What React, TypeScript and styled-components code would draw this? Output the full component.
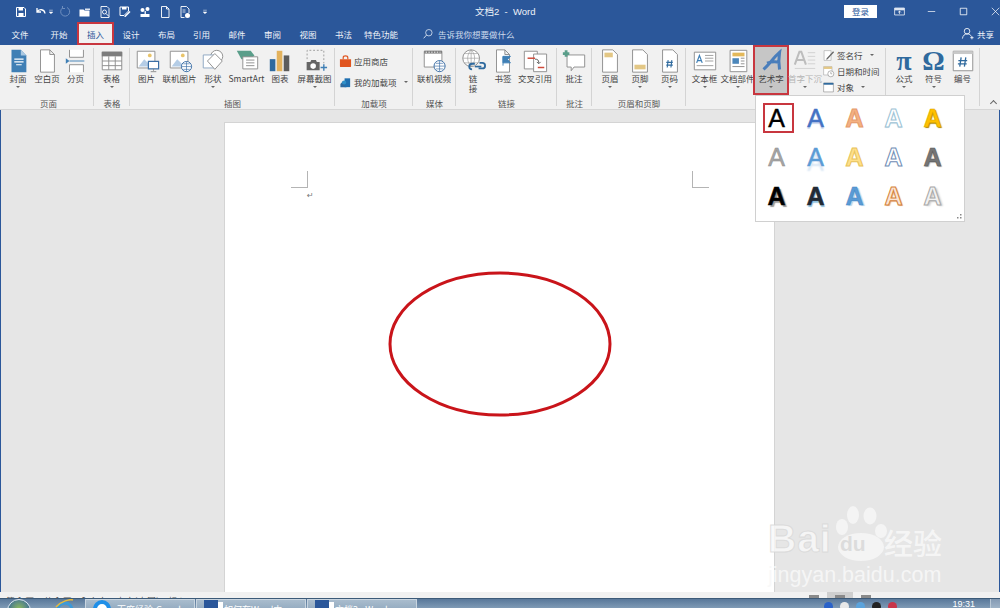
import React from "react";
import styled, { createGlobalStyle } from "styled-components";

const GlobalStyle = createGlobalStyle`
    html, body {
        margin: 0;
        padding: 0;
        background: #e6e6e6;
        overflow: hidden;
    }
    body {
        font-family: "Noto Sans CJK SC", "Liberation Sans", sans-serif;
    }
`;

const BLUE = "#2b579a";
const LINE = "#8d8d8d";

// ribbon and title bar drawings, all on a 28x28 grid
const GLYPHS: Record<string, React.ReactNode> = {
    cover: (
        <>
            <path d="M7 2h10l6 6v18H7z" fill="#3f7fb5" />
            <path d="M17 2l6 6h-6z" fill="#a9c8e2" />
            <path d="M10 12h10M10 15h10M12 18h6" stroke="#fff" strokeWidth="1.2" />
        </>
    ),
    blank: <path d="M7 2h10l5 5v19H7zM17 2v5h5" fill="#fff" stroke={LINE} />,
    pagebreak: (
        <>
            <path d="M7 2v8h15V2M7 26v-8h15v8" fill="#fff" stroke={LINE} />
            <path d="M3 11l4 3-4 3z" fill="#3f7fb5" />
            <path d="M7 14h16" stroke="#3f7fb5" />
        </>
    ),
    table: (
        <>
            <path d="M3.500 4.500h21v19h-21zM3.500 14h21M3.500 19h21M10.500 9v14.500M17.500 9v14.500" fill="#fff" stroke="#8b8b8b" />
            <path d="M3 4h22v5H3z" fill="#7d7d7d" />
        </>
    ),
    picture: (
        <>
            <path d="M3.500 3.500h19v18h-19z" fill="#fff" stroke={LINE} />
            <path d="M5 20l6-8 5 5 3-2 3 5z" fill="#b5cde6" />
            <circle cx="17" cy="8" r="2" fill="#e9c46a" />
            <path d="M15.500 14.500h11v8h-11z" fill="#fff" stroke="#3a6ea5" strokeWidth="1.300" />
            <path d="M21 22.500v2M18 25.500h6" stroke="#888" />
        </>
    ),
    onlinepicture: (
        <>
            <path d="M3.500 3.500h19v18h-19z" fill="#fff" stroke={LINE} />
            <path d="M5 20l6-8 5 5 3-2 3 5z" fill="#b5cde6" />
            <circle cx="17" cy="8" r="2" fill="#e9c46a" />
            <circle cx="21" cy="20" r="5.500" fill="#fff" stroke="#3a6ea5" />
            <path d="M15.500 20h11M21 14.500v11M17.500 17h7M17.500 23h7" stroke="#3a6ea5" strokeWidth=".7" />
        </>
    ),
    shapes: (
        <>
            <circle cx="18" cy="9" r="6.500" fill="#fff" stroke={LINE} />
            <path d="M3.500 7.500h13v14h-13z" fill="#fff" stroke="#8aa4c0" />
            <path d="M16 6l8 8-8 9-8-9z" fill="#fff" stroke={LINE} />
        </>
    ),
    smartart: (
        <>
            <path d="M3 3h15l4 5-4 4H8z" fill="#5a9e8a" />
            <path d="M9.500 9.500h16v13h-16z" fill="#fff" stroke={LINE} />
            <path d="M13 13h9M13 16h9M13 19h9" stroke="#8d8d8d" />
        </>
    ),
    chart: (
        <>
            <path d="M3 12h6v13H3z" fill="#2f6a9e" />
            <path d="M10.500 3h6v22h-6z" fill="#e3b25d" />
            <path d="M18 8h6v17h-6z" fill="#5c5c5c" />
        </>
    ),
    screenshot: (
        <>
            <path d="M5.500 12V2.500h18v14" fill="none" stroke="#999" strokeDasharray="2 2" />
            <path d="M5 15h4l1-2h5l1 2h3v9H5z" fill="#666" />
            <circle cx="12" cy="19.500" r="3" fill="#fff" />
            <path d="M20 21h7M23.500 17.500v7" stroke="#3f7fb5" strokeWidth="1.500" />
        </>
    ),
    video: (
        <>
            <path d="M3.500 3.500h19v17h-19z" fill="#fff" stroke={LINE} />
            <path d="M3.500 3h19v3h-19z" fill="#7a7a7a" />
            <path d="M5 4.500h16" stroke="#fff" strokeDasharray="1.500 1.500" />
            <circle cx="20" cy="19.500" r="6" fill="#fff" stroke="#3a6ea5" />
            <path d="M14 19.500h12M20 13.500v12M16 16.500h8M16 22.500h8" stroke="#3a6ea5" strokeWidth=".7" />
        </>
    ),
    link: (
        <>
            <circle cx="12" cy="11" r="9" fill="#fff" stroke="#8a8a8a" />
            <path d="M3 11h18M12 2v18M5 6h14M5 16h14" stroke="#9a9a9a" strokeWidth=".7" />
            <path d="M12 2c-5 5-5 13 0 18M12 2c5 5 5 13 0 18" fill="none" stroke="#9a9a9a" strokeWidth=".7" />
            <path d="M14 23a3 3 0 010-6h3M22 16h3a3 3 0 010 6h-4" fill="none" stroke="#2f6a9e" strokeWidth="2" transform="translate(-1)" />
            <path d="M16 20h7" stroke="#2f6a9e" strokeWidth="1.800" />
        </>
    ),
    bookmark: (
        <>
            <path d="M7 2h9l5 5v19H7zM16 2v5h5" fill="#fff" stroke={LINE} />
            <path d="M14 9v10M14 9h8l-3 3.500 3 3.500h-8z" fill="#3f7fb5" stroke="#3f7fb5" />
        </>
    ),
    crossref: (
        <>
            <path d="M2.500 3.500h14v19h-14z" fill="#fff" stroke={LINE} />
            <path d="M12.500 6.500h14v19h-14z" fill="#fff" stroke={LINE} />
            <path d="M6 11h8" stroke="#cf4a3a" strokeWidth="1.600" />
            <path d="M17 21h7" stroke="#cf4a3a" strokeWidth="1.600" />
            <path d="M14 12c3 0 4 1 4 4M16 15l2 2 2-2" fill="none" stroke="#555" />
        </>
    ),
    comment: (
        <>
            <path d="M6.500 7.500h19v13H14l-3 4v-4H6.500z" fill="#fff" stroke={LINE} />
            <path d="M2 6h7M5.500 2.500v7" stroke="#5a9e8a" strokeWidth="3" />
        </>
    ),
    header: (
        <>
            <path d="M6 2h11l5 5v19H6z" fill="#fff" stroke={LINE} />
            <path d="M8 5h9v5H8z" fill="#e3c785" />
        </>
    ),
    footer: (
        <>
            <path d="M6 2h11l5 5v19H6z" fill="#fff" stroke={LINE} />
            <path d="M8 18h12v5H8z" fill="#e3c785" />
        </>
    ),
    pagenum: (
        <>
            <path d="M6 2h11l5 5v19H6z" fill="#fff" stroke={LINE} />
            <path d="M12 13l-1 8M16 13l-1 8M10 15.500h7M10 18.500h7" stroke="#2f6a9e" strokeWidth="1.200" />
        </>
    ),
    textbox: (
        <>
            <path d="M2.500 4.500h23v19h-23z" fill="#fff" stroke={LINE} />
            <path d="M5 16l3-8 3 8M6 13.500h4" fill="none" stroke="#3f7fb5" strokeWidth="1.300" />
            <path d="M14 8h9M14 11h9M14 14h9M5 19h18" stroke="#9a9a9a" />
        </>
    ),
    docparts: (
        <>
            <path d="M5.500 2.500h18v23h-18z" fill="#fff" stroke={LINE} />
            <path d="M8 5h13v4H8z" fill="#e3b85a" />
            <path d="M8 11h7v6H8z" fill="#4c87bb" />
            <path d="M17 11h4M17 14h4M17 17h4M8 20h13" stroke="#8d8d8d" />
        </>
    ),
    wordart: (
        <path d="M5 24C11 19 16 11 23 5c-1 6-1 13 0 19M9 17c5-2 9-2 14-1" fill="none" stroke="#4a7ebb" strokeWidth="3.400" />
    ),
    dropcap: (
        <>
            <path d="M3 18l5-14h2l5 14M5 13h8" fill="none" stroke="#bdbdbd" strokeWidth="2.200" />
            <path d="M17 5h8M17 9h8M17 13h8M17 17h8M3 22h22" stroke="#d0d0d0" />
        </>
    ),
    numberbox: (
        <>
            <path d="M3.500 3.500h21v21h-21z" fill="#fff" stroke={LINE} />
            <path d="M3.500 3.500h21v3h-21z" fill="#c9c9c9" />
            <path d="M12 10l-1.500 10M17 10l-1.500 10M9 13.500h9.500M8.500 17h9.500" stroke="#2f6a9e" strokeWidth="1.400" />
        </>
    ),
    store: (
        <>
            <path d="M2 9h24v15a2 2 0 01-2 2H4a2 2 0 01-2-2z" fill="#e0551f" />
            <path d="M9 9V6a5 4 0 0110 0v3" fill="none" stroke="#e0551f" strokeWidth="2.500" />
        </>
    ),
    addin: (
        <>
            <path d="M8 12h8v12H3v-7z" fill="#2f6a9e" />
            <path d="M12 5h12v19H12z" fill="#1f6fb0" />
            <circle cx="11" cy="14" r="4.500" fill="#2f8fc8" />
        </>
    ),
    sign: (
        <>
            <path d="M4.500 3.500h15v21h-15z" fill="#fff" stroke={LINE} />
            <path d="M10 20L24 5l2 2-14 15-3 1z" fill="#666" />
        </>
    ),
    datetime: (
        <>
            <path d="M3.500 3.500h18v18h-18z" fill="#fff" stroke={LINE} />
            <path d="M3.500 3.500h18v5h-18z" fill="#e3c785" />
            <circle cx="19" cy="19" r="6.500" fill="#fff" stroke="#666" />
            <path d="M19 15v4h3" fill="none" stroke="#666" />
        </>
    ),
    object: (
        <>
            <path d="M3.500 4.500h21v19h-21z" fill="#fff" stroke="#666" />
            <path d="M3.500 4h21v4h-21z" fill="#2f6a9e" />
        </>
    ),
    save: (
        <>
            <path d="M5 5h15l3 3v15H5z" fill="none" stroke="#fff" strokeWidth="2" />
            <path d="M9 5h9v6H9zM9 16h10v7H9z" fill="#fff" />
        </>
    ),
    undo: <path d="M6 6v8h8M6 14c4-7 15-6 16 3" fill="none" stroke="#fff" strokeWidth="2.600" />,
    redo: <path d="M18 5a9 9 0 11-9 1M9 2v5h5" fill="none" stroke="#6f8fbf" strokeWidth="2" />,
    open: (
        <>
            <path d="M3 9h8l2 2h10v12H3z" fill="#fff" />
            <path d="M14 7h10v3H14z" fill="#dfe6f1" />
        </>
    ),
    preview: (
        <>
            <path d="M6 3h12l4 4v18H6z" fill="none" stroke="#fff" strokeWidth="1.800" />
            <circle cx="13" cy="14" r="4" fill="none" stroke="#fff" strokeWidth="1.800" />
            <path d="M16 17l6 6" stroke="#fff" strokeWidth="2" />
        </>
    ),
    saveas: (
        <>
            <path d="M4 4h17v8l-9 9H4z" fill="none" stroke="#fff" strokeWidth="2" />
            <path d="M8 4h9v5H8z" fill="#fff" />
            <path d="M13 22l10-10 2 2-10 10h-2z" fill="#fff" />
        </>
    ),
    clip: (
        <>
            <circle cx="9" cy="10" r="4" fill="#fff" />
            <circle cx="19" cy="8" r="4" fill="#fff" />
            <path d="M5 18h18v6H5z" fill="#fff" />
            <path d="M13 12h3v6h-3z" fill="#dfe6f1" />
        </>
    ),
    newdoc: <path d="M7 3h10l5 5v17H7zM17 3v5h5" fill="none" stroke="#fff" strokeWidth="1.800" />,
    savedoc: (
        <>
            <path d="M6 3h11l5 5v8M6 3v22h7" fill="none" stroke="#fff" strokeWidth="1.800" />
            <circle cx="19" cy="21" r="5" fill="#fff" />
            <path d="M9 10h6M9 14h6" stroke="#fff" strokeWidth="1.500" />
        </>
    ),
    caret: <path d="M9 9h10M9 14l5 5 5-5z" fill="#fff" stroke="#fff" strokeWidth="1.400" />,
    ribbonmode: (
        <>
            <path d="M3.500 6.500h21v15h-21z" fill="none" stroke="#fff" strokeWidth="1.600" />
            <path d="M3.500 6.500h21v5h-21z" fill="#dfe6f1" />
            <path d="M14 13v6M11 16l3-3 3 3" fill="none" stroke="#fff" strokeWidth="1.600" />
        </>
    ),
    minimize: <path d="M6 14h16" stroke="#fff" strokeWidth="1.500" />,
    maximize: <path d="M7 7h14v14H7z" fill="none" stroke="#fff" strokeWidth="1.700" />,
    close: <path d="M6 6l16 16M22 6L6 22" stroke="#fff" strokeWidth="1.500" />,
    search: (
        <>
            <circle cx="16" cy="11" r="7.500" fill="none" stroke="#e4ebf6" strokeWidth="1.800" />
            <path d="M10.500 16.500L4 24" stroke="#e4ebf6" strokeWidth="2" />
        </>
    ),
    person: (
        <>
            <circle cx="13" cy="9" r="6" fill="none" stroke="#fff" strokeWidth="1.800" />
            <path d="M3 25c1-7 5-10 10-10s8 2 9 5M20 23h7M23.500 19.500v7" fill="none" stroke="#fff" strokeWidth="1.800" />
        </>
    ),
};

type ListDef = { icon: string; label: string; caret?: boolean };

type ButtonDef = {
    label?: string;
    second?: string;
    icon?: string;
    letter?: string;
    width?: number;
    caret?: boolean;
    active?: boolean;
    muted?: boolean;
    list?: ListDef[];
    listGap?: number;
    listTop?: number;
    listLeft?: number;
};

type GroupDef = {
    label: string;
    width: number;
    inset?: number;
    items: ButtonDef[];
};

const GROUPS: GroupDef[] = [
    {
        label: "页面",
        width: 91,
        items: [
            { label: "封面", icon: "cover", width: 30, caret: true },
            { label: "空白页", icon: "blank", width: 28 },
            { label: "分页", icon: "pagebreak", width: 29 },
        ],
    },
    { label: "表格", width: 36, items: [{ label: "表格", icon: "table", width: 35, caret: true }] },
    {
        label: "插图",
        width: 205,
        items: [
            { label: "图片", icon: "picture", width: 33 },
            { label: "联机图片", icon: "onlinepicture", width: 33 },
            { label: "形状", icon: "shapes", width: 34, caret: true },
            { label: "SmartArt", icon: "smartart", width: 33 },
            { label: "图表", icon: "chart", width: 34 },
            { label: "屏幕截图", icon: "screenshot", width: 35, caret: true },
        ],
    },
    {
        label: "加载项",
        width: 78,
        items: [
            {
                width: 77,
                listGap: 7,
                listTop: 9,
                listLeft: 4,
                list: [
                    { icon: "store", label: "应用商店" },
                    { icon: "addin", label: "我的加载项", caret: true },
                ],
            },
        ],
    },
    { label: "媒体", width: 43, items: [{ label: "联机视频", icon: "video", width: 42 }] },
    {
        label: "链接",
        width: 101,
        items: [
            { label: "链", second: "接", icon: "link", width: 34 },
            { label: "书签", icon: "bookmark", width: 26 },
            { label: "交叉引用", icon: "crossref", width: 38 },
        ],
    },
    { label: "批注", width: 35, items: [{ label: "批注", icon: "comment", width: 34 }] },
    {
        label: "页眉和页脚",
        width: 94,
        inset: 3,
        items: [
            { label: "页眉", icon: "header", width: 30, caret: true },
            { label: "页脚", icon: "footer", width: 30, caret: true },
            { label: "页码", icon: "pagenum", width: 29, caret: true },
        ],
    },
    {
        // its label sits under the open gallery in this state
        label: "",
        width: 200,
        inset: 2,
        items: [
            { label: "文本框", icon: "textbox", width: 33, caret: true },
            { label: "文档部件", icon: "docparts", width: 33, caret: true },
            { label: "艺术字", icon: "wordart", width: 34, caret: true, active: true },
            { label: "首字下沉", icon: "dropcap", width: 34, caret: true, muted: true },
            {
                width: 62,
                listGap: 2,
                listTop: 3,
                listLeft: 0,
                list: [
                    { icon: "sign", label: "签名行", caret: true },
                    { icon: "datetime", label: "日期和时间" },
                    { icon: "object", label: "对象", caret: true },
                ],
            },
        ],
    },
    {
        label: "",
        width: 94,
        inset: 3,
        items: [
            { label: "公式", letter: "π", width: 30, caret: true },
            { label: "符号", letter: "Ω", width: 29, caret: true },
            { label: "编号", icon: "numberbox", width: 29 },
        ],
    },
];

const TABS = [
    { label: "文件", width: 40 },
    { label: "开始", width: 38 },
    { label: "插入", width: 35, active: true },
    { label: "设计", width: 36 },
    { label: "布局", width: 35 },
    { label: "引用", width: 35 },
    { label: "邮件", width: 36 },
    { label: "审阅", width: 35 },
    { label: "视图", width: 36 },
    { label: "书法", width: 35 },
    { label: "特色功能", width: 40 },
];

const QUICK = [
    { name: "save", width: 20 },
    { name: "undo", width: 20 },
    { name: "caret", width: 8, tuck: true },
    { name: "redo", width: 20 },
    { name: "open", width: 20 },
    { name: "preview", width: 20 },
    { name: "saveas", width: 20 },
    { name: "clip", width: 20 },
    { name: "newdoc", width: 20 },
    { name: "savedoc", width: 20 },
    { name: "caret", width: 20 },
];

const ART_STYLES = [
    { fill: "#000", stroke: "#000", line: 0.4, shadow: "none", weight: 400, selected: true },
    { fill: "#4472c4", stroke: "#4472c4", line: 0.5, shadow: "0 2px 1px #c8d6ee", weight: 400 },
    { fill: "#f4b183", stroke: "#e59a6c", line: 1, shadow: "none", weight: 700 },
    { fill: "#fff", stroke: "#9dc3d6", line: 1, shadow: "0 1px 1px #cfdfe8", weight: 700 },
    { fill: "#ffc000", stroke: "#d9a400", line: 0.5, shadow: "1px 1px 1px #a98400", weight: 700 },
    { fill: "#a5a5a5", stroke: "#8d8d8d", line: 0.5, shadow: "none", weight: 400 },
    { fill: "#5b9bd5", stroke: "#5b9bd5", line: 0.5, shadow: "0 5px 2px #d5e4f3", weight: 400 },
    { fill: "#ffe08a", stroke: "#e8c35c", line: 1, shadow: "none", weight: 700 },
    { fill: "#fff", stroke: "#6f8db5", line: 1, shadow: "none", weight: 700 },
    { fill: "#757575", stroke: "#555", line: 0.5, shadow: "1px 1px 1px #aaa", weight: 700 },
    { fill: "#000", stroke: "#000", line: 0.5, shadow: "2px 2px 1px #999", weight: 700 },
    { fill: "#222a35", stroke: "#222a35", line: 0.5, shadow: "1px 2px 1px #8fc0de", weight: 700 },
    { fill: "#5b9bd5", stroke: "#3f86c4", line: 0.5, shadow: "2px 1px 1px #b5d4ec", weight: 700 },
    { fill: "#fbe5d6", stroke: "#d5833d", line: 1, shadow: "1px 1px 1px #e6b48a", weight: 700 },
    { fill: "#f2f2f2", stroke: "#a8a8a8", line: 1, shadow: "2px 1px 2px #ccc", weight: 700 },
];

function Glyph({ name, size }: { name: string; size: number }) {
    return (
        <GlyphSvg viewBox="0 0 28 28" $size={size}>
            {GLYPHS[name]}
        </GlyphSvg>
    );
}

function RibbonItem({ item }: { item: ButtonDef }) {
    if (item.list) {
        return (
            <ListStack $width={item.width || 60} $gap={item.listGap || 0} $top={item.listTop || 0} $left={item.listLeft || 0}>
                {item.list.map(row => (
                    <ListRow key={row.label}>
                        <Glyph name={row.icon} size={13} />
                        <span>{row.label}</span>
                        {row.caret && <Caret $wide />}
                    </ListRow>
                ))}
            </ListStack>
        );
    }

    return (
        <BigButton $width={item.width || 30} $active={item.active} $muted={item.muted}>
            <IconSlot>
                {item.icon ? <Glyph name={item.icon} size={item.active ? 25 : 26} /> : <MathLetter>{item.letter}</MathLetter>}
            </IconSlot>
            <BigLabel>{item.label}</BigLabel>
            {item.second && <BigLabel>{item.second}</BigLabel>}
            {item.caret && <Caret />}
        </BigButton>
    );
}

export default function App() {
    return (
        <Window>
            <GlobalStyle />
            <TitleBar>
                <QuickAccess>
                    {QUICK.map((slot, i) => (
                        <QuickSlot key={i} $width={slot.width} $tuck={slot.tuck}>
                            <Glyph name={slot.name} size={slot.name === "caret" ? 10 : 14} />
                        </QuickSlot>
                    ))}
                </QuickAccess>
                <DocTitle>文档2  -  Word</DocTitle>
                <WindowControls>
                    <SignIn>登录</SignIn>
                    <ControlSlot><Glyph name="ribbonmode" size={13} /></ControlSlot>
                    <ControlSlot><Glyph name="minimize" size={13} /></ControlSlot>
                    <ControlSlot><Glyph name="maximize" size={13} /></ControlSlot>
                    <ControlSlot><Glyph name="close" size={13} /></ControlSlot>
                </WindowControls>
            </TitleBar>

            <TabBar>
                {TABS.map(tab => (
                    <Tab key={tab.label} $width={tab.width} $active={tab.active}>{tab.label}</Tab>
                ))}
                <SearchHint>
                    <Glyph name="search" size={12} />
                    <span>告诉我你想要做什么</span>
                </SearchHint>
                <Share>
                    <Glyph name="person" size={13} />
                    <span>共享</span>
                </Share>
            </TabBar>

            <Ribbon>
                {GROUPS.map((group, g) => (
                    <Group key={g} $width={group.width}>
                        <GroupBody $inset={group.inset || 0}>
                            {group.items.map((item, i) => <RibbonItem key={i} item={item} />)}
                        </GroupBody>
                        <GroupLabel>{group.label}</GroupLabel>
                    </Group>
                ))}
                <CollapseMark />
            </Ribbon>

            <DocArea>
                <Page>
                    <MarginMarks>
                        <CornerMark $side="left" />
                        <CornerMark $side="right" />
                    </MarginMarks>
                    <ReturnMark>↵</ReturnMark>
                    <EllipseShape viewBox="0 0 224 146">
                        <ellipse cx="112" cy="73" rx="110" ry="71" fill="none" stroke="#c9141a" strokeWidth="3" />
                    </EllipseShape>
                </Page>
            </DocArea>

            <StatusBar>
                <StatusLeft>第 1 页，共 1 页　0 个字　中文(中国)　插入</StatusLeft>
                <ViewButtons>
                    <ViewButton />
                    <ViewButton $active />
                    <ViewButton />
                </ViewButtons>
            </StatusBar>

            <Taskbar>
                <StartOrb />
                <IeIcon viewBox="0 0 20 20">
                    <path d="M3 11a7 7 0 0114 0H7a4 4 0 007 2" fill="none" stroke="#3b9ad9" strokeWidth="3" />
                    <path d="M1 8C6 2 15 0 18 1" fill="none" stroke="#e8b93a" strokeWidth="1.500" />
                </IeIcon>
                <TaskButton>
                    <AppDot />
                    <span>百度经验-Google</span>
                </TaskButton>
                <TaskButton>
                    <WordDot />
                    <span>如何在Word中</span>
                </TaskButton>
                <TaskButton>
                    <WordDot />
                    <span>文档2 - Word</span>
                </TaskButton>
                <Tray>
                    <TrayDot $color="#2a62c9" />
                    <TrayDot $color="#e8e8e8" />
                    <TrayDot $color="#5ba3dc" />
                    <TrayDot $color="#222" />
                    <TrayDot $color="#c8354a" />
                    <TrayClock>19:31</TrayClock>
                    <ShowDesktop />
                </Tray>
            </Taskbar>

            <GalleryPanel>
                <GalleryGrid>
                    {ART_STYLES.map((art, i) => (
                        <GalleryCell key={i}>
                            <ArtLetter
                                $fill={art.fill}
                                $stroke={art.stroke}
                                $line={art.line}
                                $shadow={art.shadow}
                                $weight={art.weight}
                                $selected={art.selected}
                            >
                                A
                            </ArtLetter>
                        </GalleryCell>
                    ))}
                </GalleryGrid>
                <ResizeGrip>
                    <svg viewBox="0 0 6 6" width="6" height="6">
                        <path d="M4 0h1.500v1.500H4zM1 3h1.500v1.500H1zM4 3h1.500v1.500H4z" fill="#888" />
                    </svg>
                </ResizeGrip>
            </GalleryPanel>

            <Watermark>
                <WatermarkTop>
                    <BrandText>Bai</BrandText>
                    <PawSvg viewBox="0 0 60 60">
                        <ellipse cx="15" cy="26" rx="6" ry="8" fill="#f4f4f4" />
                        <ellipse cx="26" cy="14" rx="6" ry="9" fill="#f4f4f4" />
                        <ellipse cx="43" cy="15" rx="6.500" ry="8.500" fill="#f4f4f4" />
                        <ellipse cx="54" cy="30" rx="6" ry="7" fill="#f4f4f4" />
                        <ellipse cx="34" cy="46" rx="23" ry="14" fill="#f4f4f4" />
                    </PawSvg>
                    <BrandDu>du</BrandDu>
                    <BrandCn>经验</BrandCn>
                </WatermarkTop>
                <BrandUrl>jingyan.baidu.com</BrandUrl>
            </Watermark>
        </Window>
    );
}

const Window = styled.div`
    position: relative;
    width: 1000px;
    height: 608px;
    display: flex;
    flex-direction: column;
    overflow: hidden;
    background: ${BLUE};
`;

const GlyphSvg = styled.svg<{ $size: number }>`
    width: ${p => p.$size}px;
    height: ${p => p.$size}px;
    flex: none;
    display: block;
`;

const TitleBar = styled.div`
    height: 22px;
    flex: none;
    position: relative;
    display: flex;
    align-items: center;
    justify-content: space-between;
    padding: 1px 0 0 11px;
    box-sizing: border-box;
    color: #fff;
`;

const QuickAccess = styled.div`
    display: flex;
    align-items: center;
`;

const QuickSlot = styled.div<{ $width: number; $tuck?: boolean }>`
    width: ${p => p.$width}px;
    margin-left: ${p => (p.$tuck ? "-4px" : "0")};
    display: flex;
    justify-content: center;
`;

const DocTitle = styled.div`
    position: absolute;
    left: 475px;
    top: 4px;
    font-size: 9.500px;
    line-height: 15px;
    color: #eef2f8;
    white-space: pre;
    font-family: "Liberation Sans", "Noto Sans CJK SC", sans-serif;
`;

const WindowControls = styled.div`
    display: flex;
    align-items: center;
    margin-right: -11px;
`;

const SignIn = styled.div`
    width: 33px;
    height: 13px;
    margin-right: 6px;
    background: #fff;
    color: #2b579a;
    font-size: 8.500px;
    line-height: 13px;
    text-align: center;
`;

const ControlSlot = styled.div`
    width: 32px;
    display: flex;
    justify-content: center;
`;

const TabBar = styled.div`
    height: 23px;
    flex: none;
    display: flex;
    align-items: stretch;
    color: #f1f4f9;
    font-size: 8.500px;
`;

const Tab = styled.div<{ $width: number; $active?: boolean }>`
    position: relative;
    width: ${p => p.$width}px;
    display: flex;
    align-items: center;
    justify-content: center;
    background: ${p => (p.$active ? "#f1f1f1" : "transparent")};
    color: ${p => (p.$active ? "#2b579a" : "inherit")};

    ${p => p.$active && `
        &::after {
            content: "";
            position: absolute;
            inset: 0 -1px 0 -1px;
            border: 2px solid #c8363f;
        }
    `}
`;

const SearchHint = styled.div`
    display: flex;
    align-items: center;
    gap: 4px;
    margin-left: 21px;
    color: #cfdbec;
    font-size: 8.500px;
`;

const Share = styled.div`
    margin-left: auto;
    padding-right: 6px;
    display: flex;
    align-items: center;
    gap: 3px;
`;

const Ribbon = styled.div`
    height: 65px;
    flex: none;
    position: relative;
    display: flex;
    padding-left: 3px;
    background: #f1f1f1;
    border-bottom: 1px solid #d6d6d6;
    box-sizing: border-box;
`;

const Group = styled.div<{ $width: number }>`
    width: ${p => p.$width}px;
    flex: none;
    box-sizing: border-box;
    display: flex;
    flex-direction: column;
    position: relative;

    &::after {
        content: "";
        position: absolute;
        right: 0;
        top: 3px;
        bottom: 3px;
        width: 1px;
        background: #d4d4d4;
    }
`;

const GroupBody = styled.div<{ $inset: number }>`
    flex: 1;
    display: flex;
    align-items: flex-start;
    padding-left: ${p => p.$inset}px;
    min-height: 0;
`;

const GroupLabel = styled.div`
    height: 12px;
    flex: none;
    font-size: 8.500px;
    line-height: 12px;
    color: #555;
    text-align: center;
`;

const BigButton = styled.div<{ $width: number; $active?: boolean; $muted?: boolean }>`
    position: relative;
    width: ${p => p.$width}px;
    flex: none;
    display: flex;
    flex-direction: column;
    align-items: center;
    padding-top: 3px;
    height: ${p => (p.$active ? "50px" : "auto")};
    box-sizing: border-box;
    background: ${p => (p.$active ? "#c6c6c6" : "transparent")};
    color: ${p => (p.$muted ? "#b4b4b4" : "#444")};

    ${p => p.$active && `
        &::after {
            content: "";
            position: absolute;
            inset: 0 -1px 0 -1px;
            border: 2px solid #c8363f;
        }
    `}
`;

const IconSlot = styled.div`
    height: 25px;
    display: flex;
    align-items: center;
    justify-content: center;
`;

const MathLetter = styled.span`
    font-family: "Liberation Serif", serif;
    font-weight: 700;
    font-size: 28px;
    line-height: 25px;
    color: #2f6a9e;
`;

const BigLabel = styled.div`
    font-size: 8.500px;
    line-height: 10px;
    white-space: nowrap;
`;

const Caret = styled.i<{ $wide?: boolean }>`
    display: block;
    flex: none;
    width: 0;
    height: 0;
    border-left: 2px solid transparent;
    border-right: 2px solid transparent;
    border-top: 2px solid #666;
    margin: ${p => (p.$wide ? "0 0 0 5px" : "3px 0 0")};
`;

const ListStack = styled.div<{ $width: number; $gap: number; $top: number; $left: number }>`
    width: ${p => p.$width}px;
    flex: none;
    display: flex;
    flex-direction: column;
    gap: ${p => p.$gap}px;
    padding: ${p => p.$top}px 0 0 ${p => p.$left}px;
    box-sizing: border-box;
`;

const ListRow = styled.div`
    display: flex;
    align-items: center;
    gap: 2px;
    height: 14px;
    font-size: 8.500px;
    color: #444;
    white-space: nowrap;
`;

const CollapseMark = styled.i`
    position: absolute;
    right: 4px;
    bottom: 3px;
    width: 4px;
    height: 4px;
    border-left: 1px solid #666;
    border-top: 1px solid #666;
    transform: rotate(45deg);
`;

const DocArea = styled.div`
    flex: 1;
    min-height: 0;
    display: flex;
    justify-content: center;
    padding-top: 13px;
    background: #e6e6e6;
    margin: 0 1px;
`;

const Page = styled.div`
    width: 549px;
    margin-right: 1px;
    background: #fff;
    box-shadow: 0 0 0 1px #d4d4d4;
    display: flex;
    flex-direction: column;
`;

const MarginMarks = styled.div`
    display: flex;
    justify-content: space-between;
    padding: 48px 65px 0 66px;
`;

const CornerMark = styled.i<{ $side: "left" | "right" }>`
    display: block;
    width: 16px;
    height: 16px;
    border-bottom: 1px solid #b4b4b4;
    ${p => (p.$side === "left" ? "border-right" : "border-left")}: 1px solid #b4b4b4;
`;

const ReturnMark = styled.div`
    margin: 2px 0 0 82px;
    font-size: 8px;
    line-height: 11px;
    color: #777;
    font-family: "DejaVu Sans", sans-serif;
`;

const EllipseShape = styled.svg`
    display: block;
    width: 224px;
    height: 146px;
    margin: 70px 0 0 163px;
`;

const StatusBar = styled.div`
    height: 6px;
    flex: none;
    display: flex;
    align-items: flex-start;
    justify-content: space-between;
    overflow: hidden;
    background: #f1f1f1;
    padding: 0 121px 0 6px;
`;

const StatusLeft = styled.div`
    font-size: 8.500px;
    line-height: 12px;
    letter-spacing: 0.6px;
    color: #555;
    margin-top: 2px;
`;

const ViewButtons = styled.div`
    display: flex;
`;

const ViewButton = styled.i<{ $active?: boolean }>`
    width: 26px;
    height: 6px;
    display: flex;
    justify-content: center;
    padding-top: 3px;
    box-sizing: border-box;
    background: ${p => (p.$active ? "#cfcfcf" : "transparent")};

    &::after {
        content: "";
        width: 10px;
        height: 3px;
        background: #8a8a8a;
    }
`;

const Taskbar = styled.div`
    height: 10px;
    flex: none;
    display: flex;
    align-items: flex-start;
    overflow: hidden;
    background: linear-gradient(180deg, #59789a, #7f9ab5);
    border-top: 1px solid #3c5a78;
    box-sizing: border-box;
`;

const StartOrb = styled.i`
    flex: none;
    width: 22px;
    height: 22px;
    margin: 0 0 0 7px;
    border-radius: 50%;
    background: radial-gradient(circle at 50% 40%, #8fbb5e, #396b9b 70%);
    border: 1px solid #dfe8f0;
`;

const IeIcon = styled.svg`
    flex: none;
    width: 20px;
    height: 20px;
    margin: 0 0 0 24px;
`;

const TaskButton = styled.div`
    flex: none;
    width: 110px;
    height: 12px;
    margin-left: 1px;
    display: flex;
    align-items: flex-start;
    gap: 6px;
    padding-left: 7px;
    box-sizing: border-box;
    overflow: hidden;
    white-space: nowrap;
    background: linear-gradient(180deg, #a9bccd, #90a8be);
    border: 1px solid #c9d5e0;
    border-bottom: 0;
    font-size: 9px;
    line-height: 20px;
    color: #fff;

    &:first-of-type {
        margin-left: 10px;
    }
`;

const AppDot = styled.i`
    width: 18px;
    height: 18px;
    flex: none;
    box-sizing: border-box;
    border-radius: 50%;
    border: 4px solid #1f8fe8;
    background: #fff;
`;

const WordDot = styled.i`
    width: 14px;
    height: 14px;
    flex: none;
    background: #2b579a;
    box-shadow: 5px 2px 0 #fff;
`;

const Tray = styled.div`
    margin-left: auto;
    display: flex;
    align-items: flex-start;
    gap: 7px;
`;

const TrayDot = styled.i<{ $color: string }>`
    width: 9px;
    height: 9px;
    margin-top: 3px;
    border-radius: 50%;
    background: ${p => p.$color};
`;

const TrayClock = styled.div`
    margin-left: 48px;
    font-size: 9px;
    line-height: 10px;
    color: #fff;
    font-family: "Liberation Sans", sans-serif;
`;

const ShowDesktop = styled.i`
    width: 9px;
    height: 10px;
    margin-left: 8px;
    border-left: 1px solid #b9c8d6;
    background: rgba(255, 255, 255, 0.25);
`;

const GalleryPanel = styled.div`
    position: absolute;
    left: 755px;
    top: 95px;
    width: 210px;
    height: 127px;
    box-sizing: border-box;
    background: #fff;
    border: 1px solid #d0d0d0;
`;

const GalleryGrid = styled.div`
    display: grid;
    grid-template-columns: repeat(5, 39px);
    grid-auto-rows: 39px;
    padding: 2px 0 0 1px;
`;

const GalleryCell = styled.div`
    display: flex;
    align-items: center;
    justify-content: center;
`;

const ArtLetter = styled.span<{ $fill: string; $stroke: string; $line: number; $shadow: string; $weight: number; $selected?: boolean }>`
    width: 31px;
    height: 30px;
    box-sizing: border-box;
    display: flex;
    align-items: center;
    justify-content: center;
    border: 2px solid ${p => (p.$selected ? "#c8363f" : "transparent")};
    margin-left: ${p => (p.$selected ? "3px" : "0")};
    padding-right: ${p => (p.$selected ? "3px" : "0")};
    font-family: "Liberation Sans", sans-serif;
    font-size: 25px;
    line-height: 26px;
    font-weight: ${p => p.$weight};
    color: ${p => p.$fill};
    -webkit-text-stroke: ${p => p.$line}px ${p => p.$stroke};
    text-shadow: ${p => p.$shadow};
`;

const ResizeGrip = styled.div`
    position: absolute;
    right: 2px;
    bottom: 1px;
    line-height: 0;
`;

const Watermark = styled.div`
    position: absolute;
    left: 768px;
    top: 500px;
    width: 180px;
    display: flex;
    flex-direction: column;
    pointer-events: none;
`;

const WatermarkTop = styled.div`
    position: relative;
    height: 62px;
    display: flex;
    align-items: flex-end;
`;

const BrandText = styled.span`
    font-family: "Liberation Sans", sans-serif;
    font-weight: 700;
    font-size: 39px;
    line-height: 42px;
    letter-spacing: 1px;
    color: rgba(248, 248, 248, 0.85);
    -webkit-text-stroke: 1px rgba(215, 215, 215, 0.8);
    margin-bottom: 2px;
`;

const PawSvg = styled.svg`
    position: absolute;
    left: 58px;
    top: 1px;
    width: 62px;
    height: 60px;
`;

const BrandDu = styled.span`
    position: absolute;
    left: 72px;
    bottom: 7px;
    font-family: "Liberation Sans", sans-serif;
    font-weight: 700;
    font-size: 21px;
    line-height: 22px;
    color: #dcdcdc;
`;

const BrandCn = styled.span`
    position: absolute;
    left: 116px;
    bottom: 4px;
    font-size: 29px;
    line-height: 32px;
    font-weight: 500;
    color: rgba(248, 248, 248, 0.9);
`;

const BrandUrl = styled.div`
    font-family: "Liberation Sans", sans-serif;
    font-size: 21.500px;
    line-height: 26px;
    color: rgba(248, 248, 248, 0.9);
    white-space: nowrap;
`;
